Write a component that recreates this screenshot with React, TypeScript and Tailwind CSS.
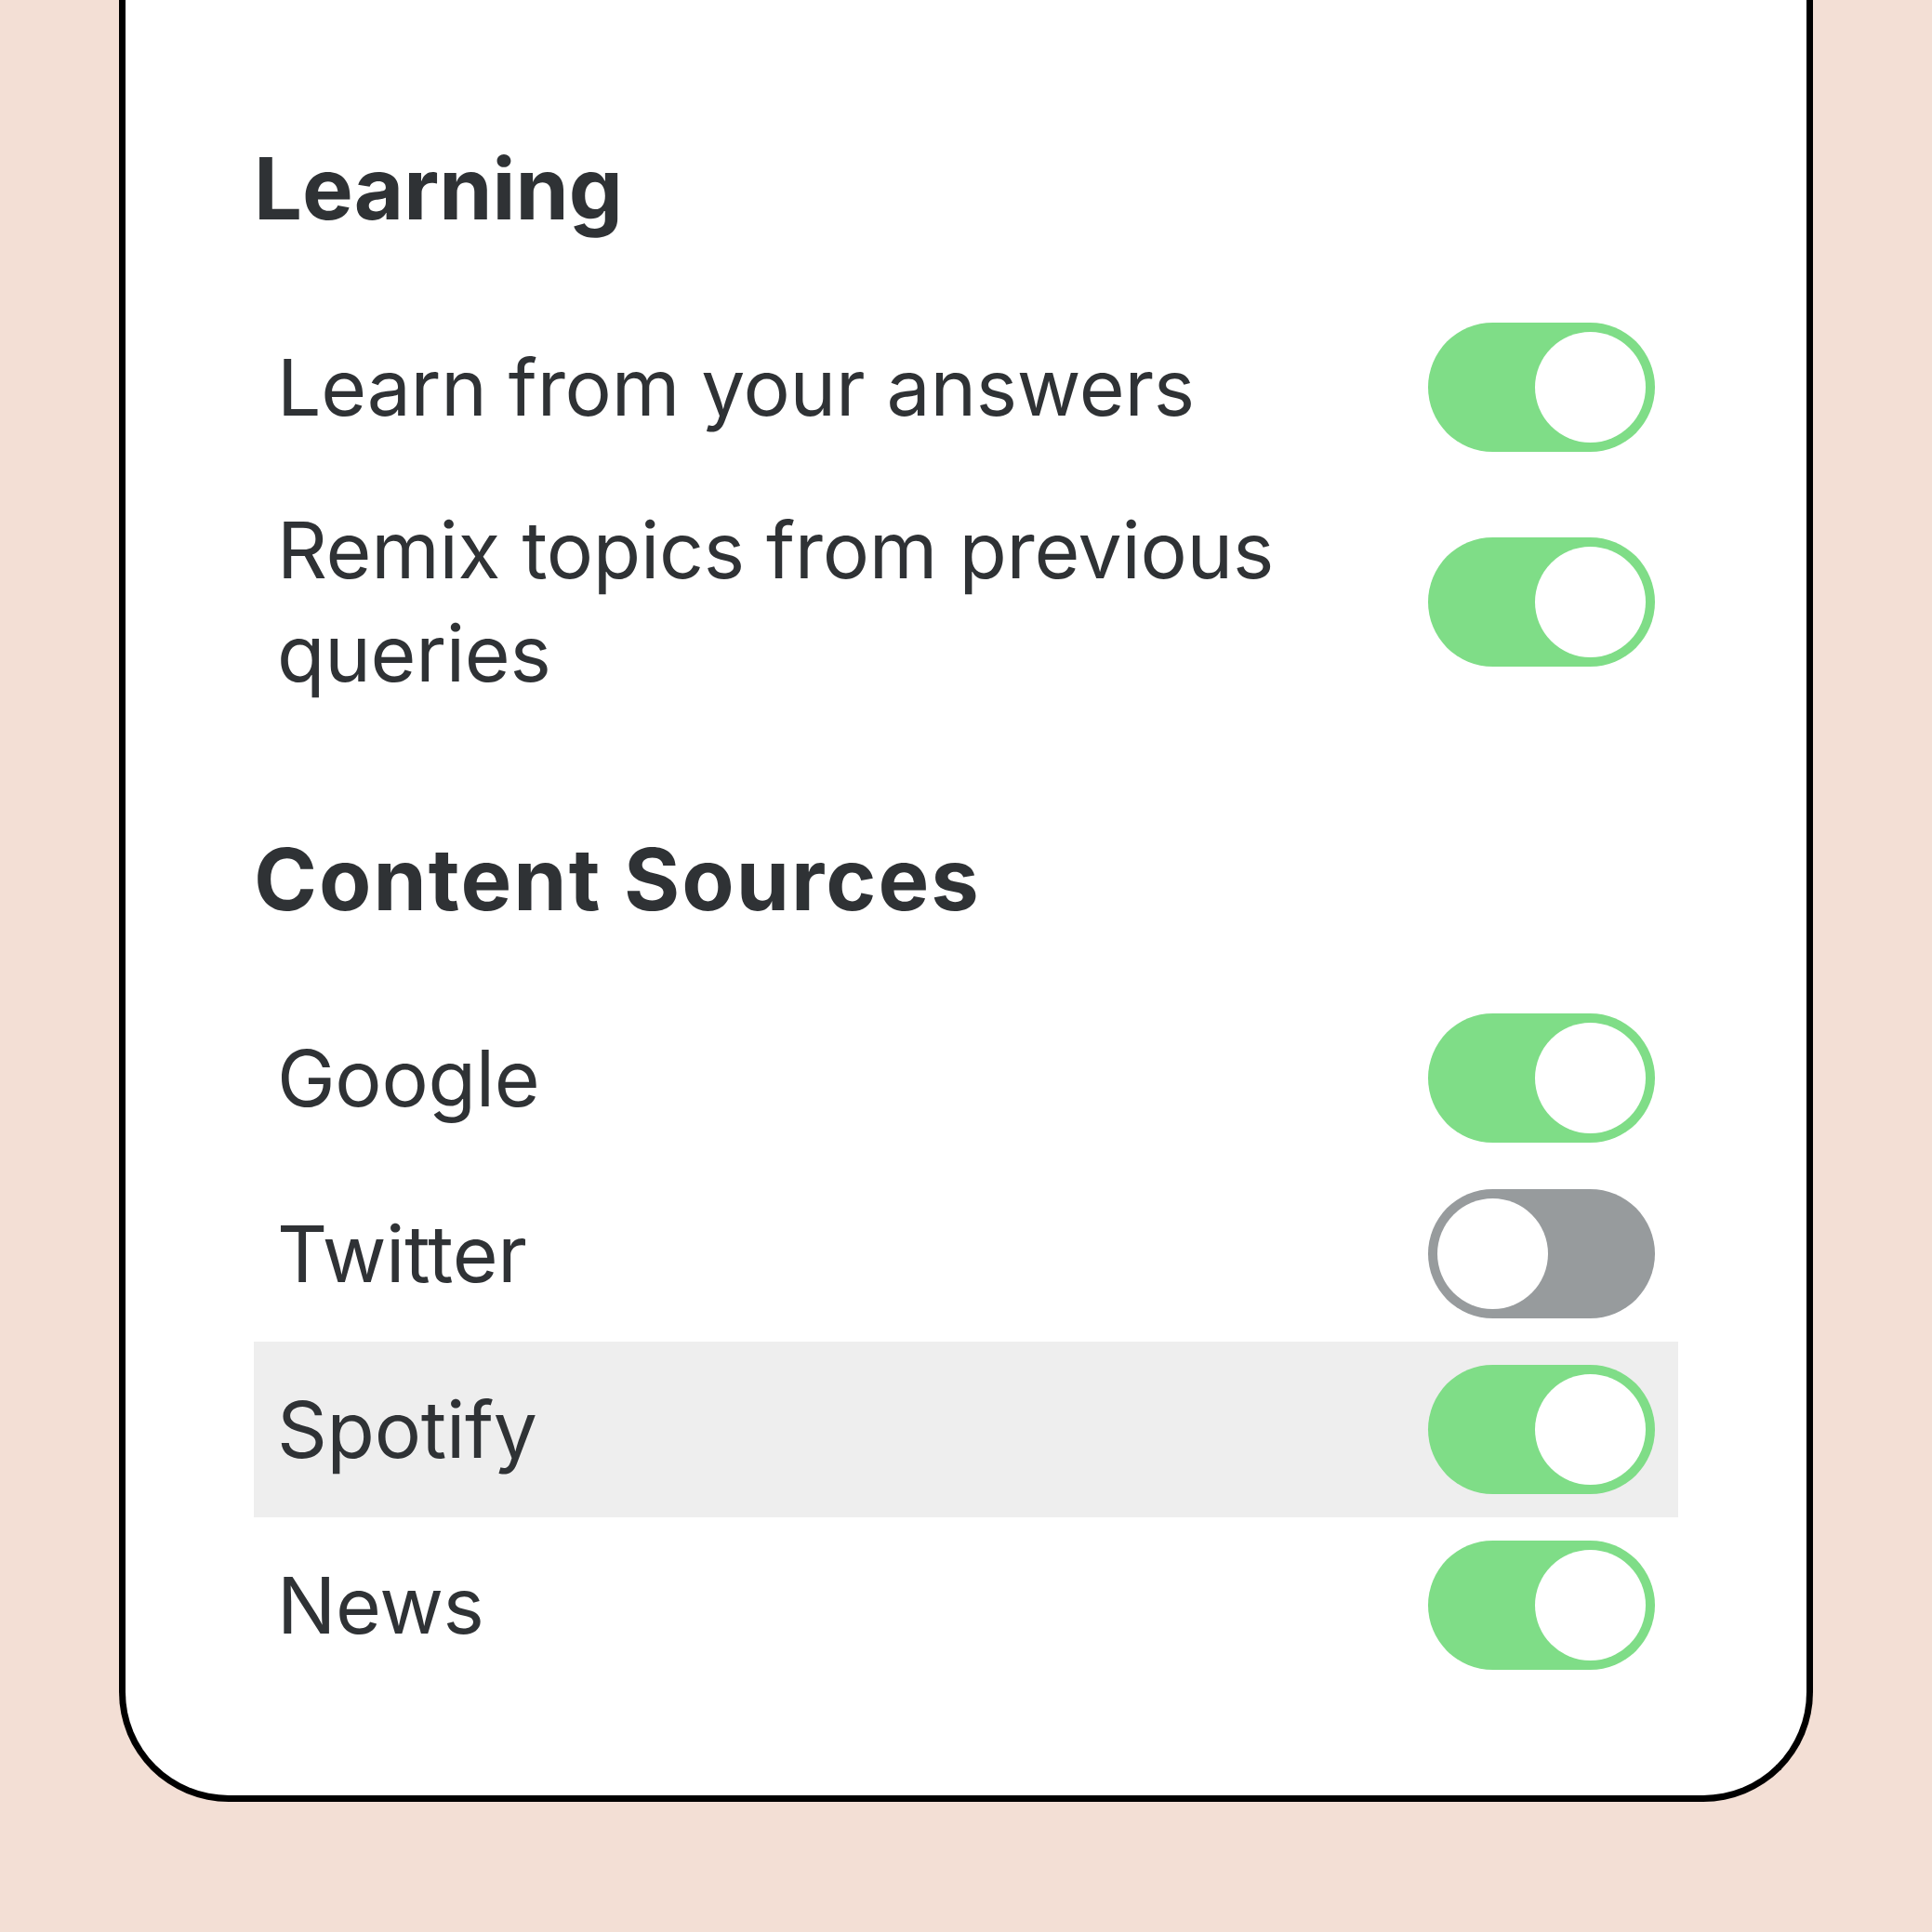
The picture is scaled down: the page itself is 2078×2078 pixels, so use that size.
import React from "react"

type Item = { label: string; on: boolean; highlight?: boolean }

const learning: Item[] = [
    { label: "Learn from your answers", on: true },
    { label: "Remix topics from previous queries", on: true },
]

const sources: Item[] = [
    { label: "Google", on: true },
    { label: "Twitter", on: false },
    { label: "Spotify", on: true, highlight: true },
    { label: "News", on: true },
]

function Toggle({ on }: { on: boolean }) {
    return (
        <div
            className={
                "flex h-[139px] w-[244px] shrink-0 items-center rounded-full px-[10px] " +
                (on ? "justify-end bg-[#7fdd87]" : "justify-start bg-[#979b9d]")
            }
        >
            <div className="h-[119px] w-[119px] rounded-full bg-white" />
        </div>
    )
}

function Row({ item }: { item: Item }) {
    return (
        <div
            className={
                "flex items-center justify-between gap-[60px] px-[25px] py-[25px] " +
                (item.highlight ? "bg-[#eeeeee]" : "")
            }
        >
            <span className="max-w-[1150px] text-[84px] leading-[111px] tracking-[-0.3px] text-[#2f3235]">
                {item.label}
            </span>
            <Toggle on={item.on} />
        </div>
    )
}

function Section({
    title,
    items,
    className,
    titleClass,
}: {
    title: string
    items: Item[]
    className?: string
    titleClass?: string
}) {
    return (
        <section className={className}>
            <h2 className={"mb-[64px] text-[92px] font-bold leading-[110px] text-[#2f3235] " + (titleClass ?? "")}>
                {title}
            </h2>
            <div className="flex flex-col">
                {items.map((item) => (
                    <Row key={item.label} item={item} />
                ))}
            </div>
        </section>
    )
}

export default function App() {
    return (
        <div
            className="min-h-screen bg-[#f3dfd5] pb-[139px]"
            style={{ fontFamily: "Inter, 'Noto Sans', sans-serif" }}
        >
            <div className="mx-auto w-[1822px] rounded-b-[118px] border-x-[7px] border-b-[7px] border-black bg-white px-[138px] pb-[110px] pt-[148px]">
                <Section title="Learning" items={learning} />
                <Section
                    title="Content Sources"
                    items={sources}
                    className="mt-[108px]"
                    titleClass="tracking-[2px]"
                />
            </div>
        </div>
    )
}
